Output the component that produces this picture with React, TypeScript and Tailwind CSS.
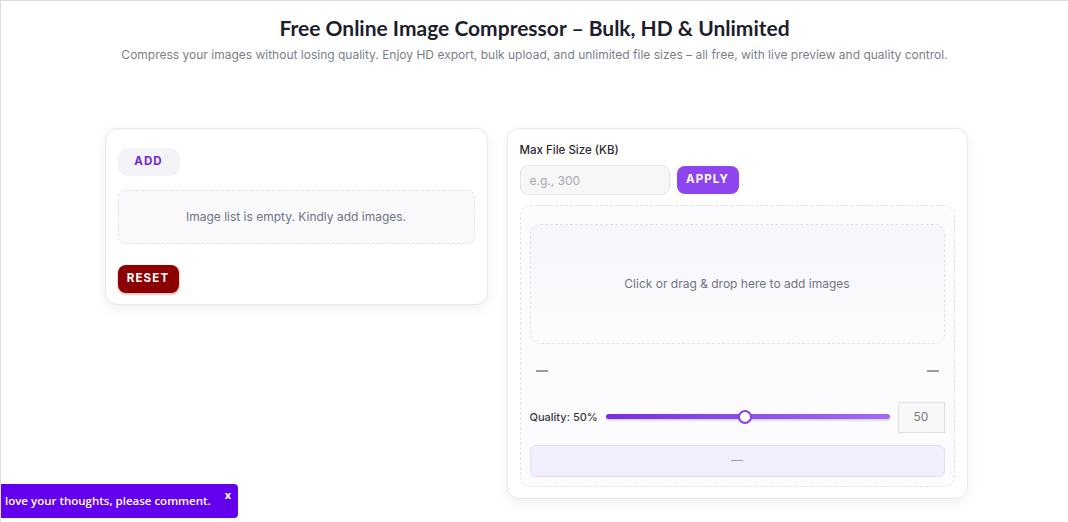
import React from "react";

function Dash() {
  return <span className="block h-[1.5px] w-[12px] bg-[#9d9da8]" />;
}

export default function App() {
  return (
    <div className="min-h-screen w-full border-t border-l border-[#dcdcdc] bg-white font-['Inter',sans-serif] relative">
      <header className="pt-[13px] text-center">
        <h1 className="font-['Lato',sans-serif] text-[21px] font-bold leading-[28px] text-[#1e1e2d]">
          Free Online Image Compressor – Bulk, HD &amp; Unlimited
        </h1>
        <p className="mt-[4px] text-[12px] leading-[18px] text-[#7a7f8c]">
          Compress your images without losing quality. Enjoy HD export, bulk upload, and unlimited file sizes – all free, with live preview and quality control.
        </p>
      </header>

      <main className="mt-[64px] flex items-start justify-center gap-[19px] pl-[3px]">
        {/* image list card */}
        <section className="w-[383px] rounded-[12px] border border-[#e8e8ee] bg-white px-[12px] pt-[18px] pb-[11px] shadow-[0_4px_14px_rgba(0,0,0,0.06)]">
          <button className="h-[28px] w-[62px] rounded-[10px] bg-[#f4f4f8] text-[11.5px] font-bold tracking-[0.1em] text-[#6d28d9]">
            ADD
          </button>
          <div className="mt-[14px] flex h-[54px] items-center justify-center rounded-[8px] border border-dashed border-[#e2e2ea] bg-[#fafafd] text-[12px] text-[#6f7382]">
            Image list is empty. Kindly add images.
          </div>
          <button className="mt-[21px] h-[28px] w-[61px] rounded-[8px] bg-[#8b0000] text-[11.5px] font-bold tracking-[0.1em] text-white shadow-[0_1px_3px_rgba(139,0,0,0.4)]">
            RESET
          </button>
        </section>

        {/* settings card */}
        <section className="w-[461px] rounded-[12px] border border-[#e8e8ee] bg-white px-[12px] pt-[14px] pb-[11px] shadow-[0_4px_14px_rgba(0,0,0,0.06)]">
          <label className="block text-[11.5px] font-medium leading-[14px] text-[#2b2b33]">Max File Size (KB)</label>
          <div className="mt-[8px] flex items-center gap-[7px]">
            <input
              placeholder="e.g., 300"
              className="h-[30px] w-[150px] rounded-[8px] border border-[#e6e6ea] bg-[#f7f7f8] px-[9px] text-[12px] text-[#333] placeholder:text-[#a8a8b0] outline-none"
            />
            <button className="h-[28px] w-[62px] rounded-[8px] bg-[#8e44ee] text-[11.5px] font-bold tracking-[0.1em] text-white">
              APPLY
            </button>
          </div>

          <div className="mt-[10px] rounded-[10px] border border-dashed border-[#e4e4ec] bg-[#fcfcff] px-[9px] pt-[18px] pb-[9px]">
            <div className="flex h-[120px] items-center justify-center rounded-[10px] border border-dashed border-[#e2e2ea] bg-gradient-to-b from-[#f7f7fb] to-[#fcfcff] text-[12px] text-[#6f7382]">
              Click or drag &amp; drop here to add images
            </div>

            <div className="mt-[26px] flex items-center justify-between px-[6px]">
              <Dash />
              <Dash />
            </div>

            <div className="mt-[30px] flex items-center gap-[8px]">
              <span className="text-[11px] font-medium text-[#3a3a44] whitespace-nowrap">Quality: 50%</span>
              <div className="relative h-[14px] flex-1">
                <div className="absolute left-0 right-0 top-[4px] h-[5px] rounded-full bg-gradient-to-r from-[#7a2ddf] to-[#a56af0] shadow-[0_1.5px_2px_rgba(0,0,0,0.18)]" />
                <div className="absolute top-0 left-[calc(49%-7px)] h-[14px] w-[14px] rounded-full border-[2px] border-[#8a3ee8] bg-white" />
              </div>
              <div className="flex h-[31px] w-[47px] items-center justify-center border border-[#e0e0e4] bg-[#f8f8f8] text-[12px] text-[#7a7a84]">
                50
              </div>
            </div>

            <div className="mt-[12px] flex h-[32px] items-center justify-center rounded-[6px] border border-[#e6dcfb] bg-[#f3eefe]">
              <Dash />
            </div>
          </div>
        </section>
      </main>

      {/* feedback tab */}
      <div className="absolute left-0 top-[483px] flex h-[34px] w-[237px] items-center rounded-r-[4px] bg-[#6300ee] pl-[4px] font-['Open_Sans',sans-serif] text-[11.5px] font-semibold text-white">
        love your thoughts, please comment.
        <span className="absolute right-[7px] top-[3px] text-[11px] font-bold">x</span>
      </div>
    </div>
  );
}
